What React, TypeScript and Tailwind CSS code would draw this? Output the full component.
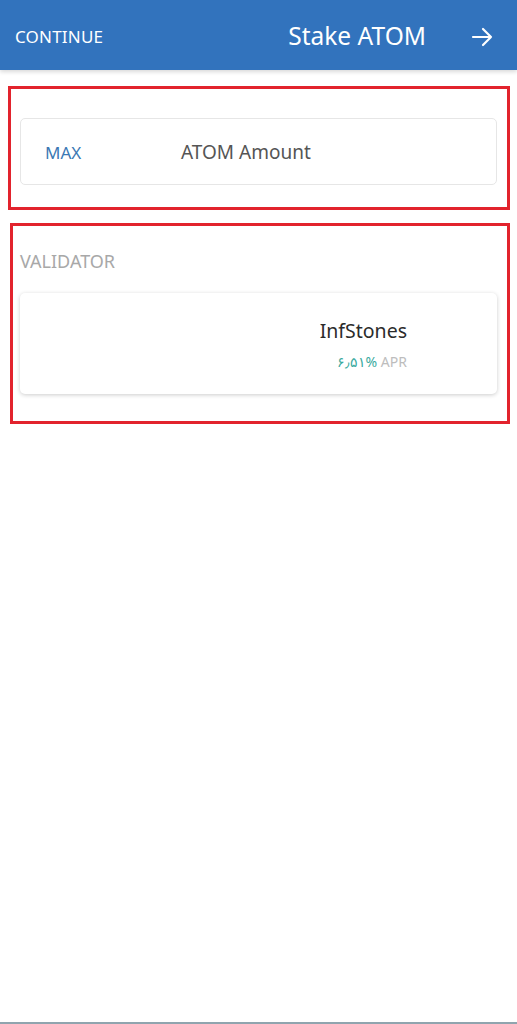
import React from "react";

export default function App() {
  return (
    <div
      className="relative w-[517px] h-[1024px] bg-white overflow-hidden"
      style={{ fontFamily: '"Noto Sans", "Open Sans", sans-serif' }}
    >
      <header className="h-[70px] bg-[#3273bd] flex items-center pt-[3px] pl-[15px] pr-[24px] shadow-[0_2px_4px_rgba(0,0,0,0.15)]">
        <span className="text-white text-[17px] tracking-[0.2px]">CONTINUE</span>
        <span className="ml-auto text-white text-[24.5px] mr-[45px]">Stake ATOM</span>
        <svg width="22" height="20" viewBox="0 0 22 20" fill="none" stroke="white" strokeWidth="2.2" strokeLinecap="round" strokeLinejoin="round">
          <path d="M2 10h18M12 2l8 8-8 8" />
        </svg>
      </header>

      <div className="mt-[16px] ml-[8px] w-[502px] h-[124px] border-[3px] border-[#e2232d] pt-[29px] pl-[9px] pr-[10px]">
        <div className="h-[67px] rounded-[5px] border border-[#e6e6e6] flex items-center pt-[2px] pl-[24px]">
          <span className="text-[#3b78b4] text-[17px] w-[136px]">MAX</span>
          <span className="text-[#555] text-[19px]">ATOM Amount</span>
        </div>
      </div>

      <div className="mt-[13px] ml-[10px] w-[500px] h-[201px] border-[3px] border-[#e2232d] pl-[7px] pr-[10px]">
        <div className="text-[#a8a8a8] text-[18px] mt-[22px] leading-[26px]">VALIDATOR</div>
        <div className="mt-[19px] h-[101px] rounded-[5px] bg-white shadow-[0_1px_4px_rgba(0,0,0,0.2)] flex flex-col items-end pr-[90px] pt-[25px]">
          <span className="text-[#2b2b2b] text-[19.5px] leading-[26px]">InfStones</span>
          <span className="mt-[8px] text-[14px] leading-[19px]">
            <span className="text-[#3aaa9e]">۶٫۵۱%</span>
            <span className="text-[#bdbdbd]"> APR</span>
          </span>
        </div>
      </div>

      <div className="absolute bottom-0 left-0 right-0 h-[2px] bg-[#90a4ae]" />
    </div>
  );
}
